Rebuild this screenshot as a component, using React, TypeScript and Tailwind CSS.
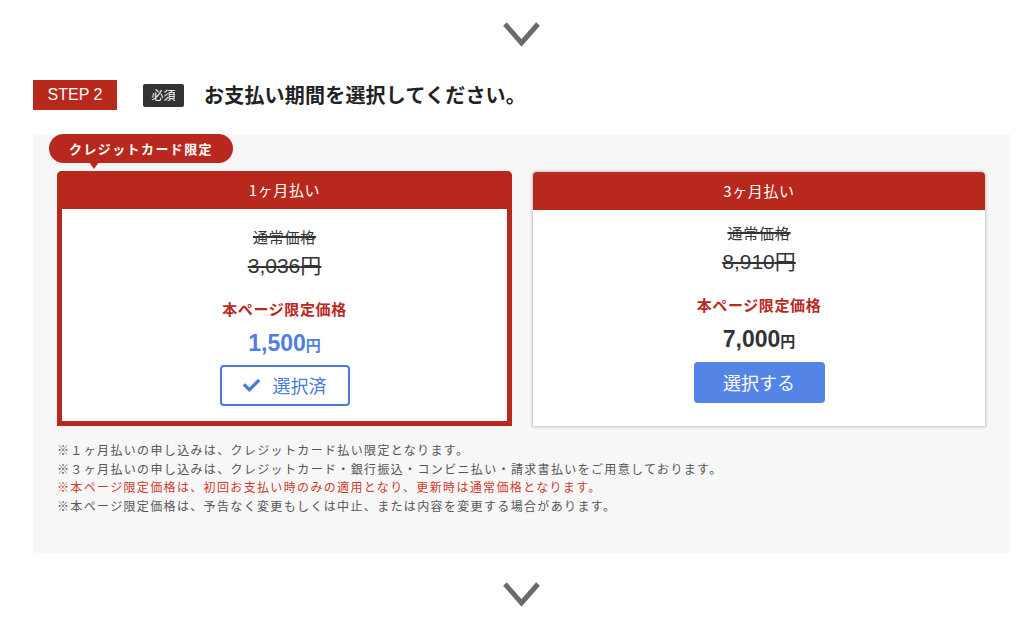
import { ReactNode } from "react";

const JP = "font-['Noto_Sans_CJK_JP','Noto_Sans',sans-serif]";
const NUM = "font-['Liberation_Sans','Noto_Sans_CJK_JP',sans-serif]";

const NOTES = [
  { text: "※１ヶ月払いの申し込みは、クレジットカード払い限定となります。", red: false },
  {
    text: "※３ヶ月払いの申し込みは、クレジットカード・銀行振込・コンビニ払い・請求書払いをご用意しております。",
    red: false,
  },
  { text: "※本ページ限定価格は、初回お支払い時のみの適用となり、更新時は通常価格となります。", red: true },
  { text: "※本ページ限定価格は、予告なく変更もしくは中止、または内容を変更する場合があります。", red: false },
];

function Chevron() {
  return (
    <div className="flex justify-center">
      <svg width="39" height="25" viewBox="0 0 39 25" fill="none">
        <polyline points="3,2 19.5,21 36,2" stroke="#6b6b6b" strokeWidth="5" strokeLinejoin="miter" />
      </svg>
    </div>
  );
}

function CheckIcon() {
  return (
    <svg width="17" height="17" viewBox="0 0 512 512" fill="#4a7bdb">
      <path d="M173.898 439.404l-166.4-166.4c-9.997-9.997-9.997-26.206 0-36.204l36.203-36.204c9.997-9.998 26.207-9.998 36.204 0L192 312.69 432.095 72.596c9.997-9.997 26.207-9.997 36.204 0l36.203 36.204c9.997 9.997 9.997 26.206 0 36.204l-294.4 294.401c-9.998 9.997-26.207 9.997-36.204-.001z" />
    </svg>
  );
}

function PriceBody({
  regular,
  price,
  priceColor,
  btnGap,
  children,
}: {
  regular: string;
  price: string;
  priceColor: string;
  btnGap: string;
  children: ReactNode;
}) {
  return (
    <div className="flex flex-col items-center">
      <p
        className={`${JP} text-[15px] leading-[22px] tracking-[0.8px] text-[#333] line-through decoration-[#333] decoration-[1.5px]`}
      >
        通常価格
      </p>
      <p
        className={`${NUM} mt-[4px] text-[21px] leading-[28px] text-[#333] line-through decoration-[#333] decoration-[1.5px]`}
      >
        {regular}円
      </p>
      <p className={`${JP} mt-[18px] text-[15px] leading-[22px] font-bold tracking-[0.6px] text-[#b9291f]`}>
        本ページ限定価格
      </p>
      <p className={`${NUM} mt-[8px] h-[30px] text-[23px] leading-[30px] font-bold ${priceColor}`}>
        {price}
        <span className={`${JP} text-[15px] leading-none`}>円</span>
      </p>
      <div className={btnGap}>{children}</div>
    </div>
  );
}

export default function App() {
  return (
    <div className={`${JP} h-[633px] w-full overflow-hidden bg-white`}>
      <div className="ml-[33px] w-[977px]">
        <div className="pt-[22px]">
          <Chevron />
        </div>

        {/* STEP header */}
        <div className="mt-[33px] flex items-center">
          <div className="flex h-[30px] w-[84px] items-center justify-center bg-[#b9281c] font-['Liberation_Sans',sans-serif] text-[16px] text-white">
            STEP 2
          </div>
          <div className="ml-[26px] flex h-[23px] w-[41px] items-center justify-center rounded-[2px] bg-[#333] text-[12px] text-white">
            必須
          </div>
          <h2 className="ml-[20px] text-[20px] leading-[30px] font-bold tracking-[0.2px] text-[#222]">
            お支払い期間を選択してください。
          </h2>
        </div>

        {/* panel */}
        <div className="mt-[24px] bg-[#f7f7f7] pr-[25px] pb-[38px] pl-[24px]">
          <div className="relative -ml-[8px] inline-flex h-[29px] items-center rounded-full bg-[#b9281c] px-[20px] text-[13px] font-bold tracking-[1.4px] text-white">
            クレジットカード限定
            <span className="absolute top-[28px] left-[40px] h-0 w-0 border-x-[5px] border-t-[7px] border-x-transparent border-t-[#b9281c]" />
          </div>

          <div className="mt-[8px] grid grid-cols-[455px_452px] items-start gap-[21px]">
            {/* 1 month */}
            <div className="rounded-t-[5px] border-[5px] border-[#b9281c] bg-white">
              <div className="-mx-[5px] -mt-[5px] flex h-[38px] items-end justify-center rounded-t-[5px] bg-[#b9281c] pb-[8px] text-[15px] leading-[22px] font-normal tracking-[0.6px] text-white">
                1ヶ月払い
              </div>
              <div className="pt-[17px] pb-[15px]">
                <PriceBody regular="3,036" price="1,500" priceColor="text-[#4f80de]" btnGap="mt-[7px]">
                  <button className="flex h-[41px] w-[130px] items-center justify-center gap-[13px] rounded-[4px] border-2 border-[#4a7bdb] bg-white text-[18px] text-[#4a7bdb]">
                    <CheckIcon />
                    <span>選択済</span>
                  </button>
                </PriceBody>
              </div>
            </div>

            {/* 3 months */}
            <div className="mt-[1px] overflow-hidden rounded-t-[4px] bg-white shadow-[0_0_3px_1px_rgba(0,0,0,0.22)]">
              <div className="flex h-[38px] items-center justify-center bg-[#b9281c] text-[15px] leading-[22px] font-normal tracking-[0.6px] text-white">
                3ヶ月払い
              </div>
              <div className="pt-[12px] pb-[23px]">
                <PriceBody regular="8,910" price="7,000" priceColor="text-[#333]" btnGap="mt-[8px]">
                  <button className="flex h-[41px] w-[131px] items-center justify-center rounded-[4px] bg-[#5384e6] text-[18px] text-white">
                    選択する
                  </button>
                </PriceBody>
              </div>
            </div>
          </div>

          <div className="mt-[15px]">
            {NOTES.map((n) => (
              <p
                key={n.text}
                className={`text-[12px] leading-[18.5px] tracking-[1.35px] ${n.red ? "text-[#cf3b2f]" : "text-[#555]"}`}
              >
                {n.text}
              </p>
            ))}
          </div>
        </div>

        <div className="pt-[29px]">
          <Chevron />
        </div>
      </div>
    </div>
  );
}
